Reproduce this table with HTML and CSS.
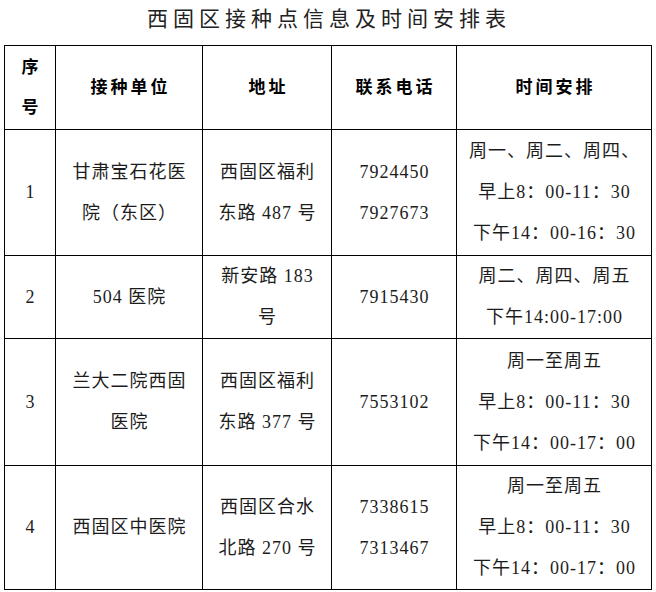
FILE: index.html
```html
<!DOCTYPE html>
<html lang="zh-CN">
<head>
<meta charset="utf-8">
<title>西固区接种点信息及时间安排表</title>
<link rel="stylesheet" href="styles.css">
</head>
<body>
<h1 class="title">西固区接种点信息及时间安排表</h1>
<table class="sched">
  <colgroup>
    <col class="c-no">
    <col class="c-unit">
    <col class="c-addr">
    <col class="c-tel">
    <col class="c-time">
  </colgroup>
  <thead>
    <tr class="r-head">
      <th><span class="hl">序</span><span class="hl">号</span></th>
      <th>接种单位</th>
      <th>地址</th>
      <th>联系电话</th>
      <th>时间安排</th>
    </tr>
  </thead>
  <tbody>
    <tr class="r1">
      <td><span class="ln">1</span></td>
      <td><span class="ln">甘肃宝石花医</span><span class="ln">院（东区）</span></td>
      <td><span class="ln">西固区福利</span><span class="ln">东路 487 号</span></td>
      <td><span class="ln">7924450</span><span class="ln">7927673</span></td>
      <td><span class="ln">周一、周二、周四、</span><span class="ln">早上8：00-11：30</span><span class="ln">下午14：00-16：30</span></td>
    </tr>
    <tr class="r2">
      <td><span class="ln">2</span></td>
      <td><span class="ln">504 医院</span></td>
      <td><span class="ln">新安路 183</span><span class="ln">号</span></td>
      <td><span class="ln">7915430</span></td>
      <td><span class="ln">周二、周四、周五</span><span class="ln">下午14:00-17:00</span></td>
    </tr>
    <tr class="r3">
      <td><span class="ln">3</span></td>
      <td><span class="ln">兰大二院西固</span><span class="ln">医院</span></td>
      <td><span class="ln">西固区福利</span><span class="ln">东路 377 号</span></td>
      <td><span class="ln">7553102</span></td>
      <td><span class="ln">周一至周五</span><span class="ln">早上8：00-11：30</span><span class="ln">下午14：00-17：00</span></td>
    </tr>
    <tr class="r4">
      <td><span class="ln">4</span></td>
      <td><span class="ln">西固区中医院</span></td>
      <td><span class="ln">西固区合水</span><span class="ln">北路 270 号</span></td>
      <td><span class="ln">7338615</span><span class="ln">7313467</span></td>
      <td><span class="ln">周一至周五</span><span class="ln">早上8：00-11：30</span><span class="ln">下午14：00-17：00</span></td>
    </tr>
  </tbody>
</table>
</body>
</html>
```

FILE: styles.css
```css
html, body {
  margin: 0;
  padding: 0;
  background: #ffffff;
}

body {
  font-family: "Liberation Serif", "Noto Sans CJK SC", serif;
  color: #1c1c1c;
}

.title {
  margin: 0;
  height: 45px;
  line-height: 34px;
  text-align: center;
  font-family: "Noto Sans CJK SC", "Noto Sans", sans-serif;
  font-size: 21px;
  font-weight: 400;
  letter-spacing: 5px;
  color: #222;
  padding-left: 2px;
}

.sched {
  margin-left: 4px;
  width: 647px;
  border-collapse: collapse;
  table-layout: fixed;
}

.c-no { width: 51px; }
.c-unit { width: 147px; }
.c-addr { width: 129px; }
.c-tel { width: 125px; }
.c-time { width: 195px; }

.sched th,
.sched td {
  border: 1px solid #000;
  padding: 0;
  text-align: center;
  vertical-align: middle;
  white-space: nowrap;
  overflow: visible;
}

.sched th {
  font-size: 17px;
  font-weight: bold;
  letter-spacing: 3px;
  line-height: 40px;
  color: #000;
  padding-left: 3px;
}

.hl {
  display: block;
  height: 40px;
  line-height: 40px;
}

.sched td {
  font-size: 18px;
  letter-spacing: 1px;
  padding-left: 1px;
}

.ln {
  display: block;
  height: 41px;
  line-height: 41px;
  overflow: hidden;
}

.r-head th { height: 83px; }
.r1 td { height: 125px; }
.r2 td { height: 82px; }
.r3 td { height: 126px; }
.r4 td { height: 122px; }
```
